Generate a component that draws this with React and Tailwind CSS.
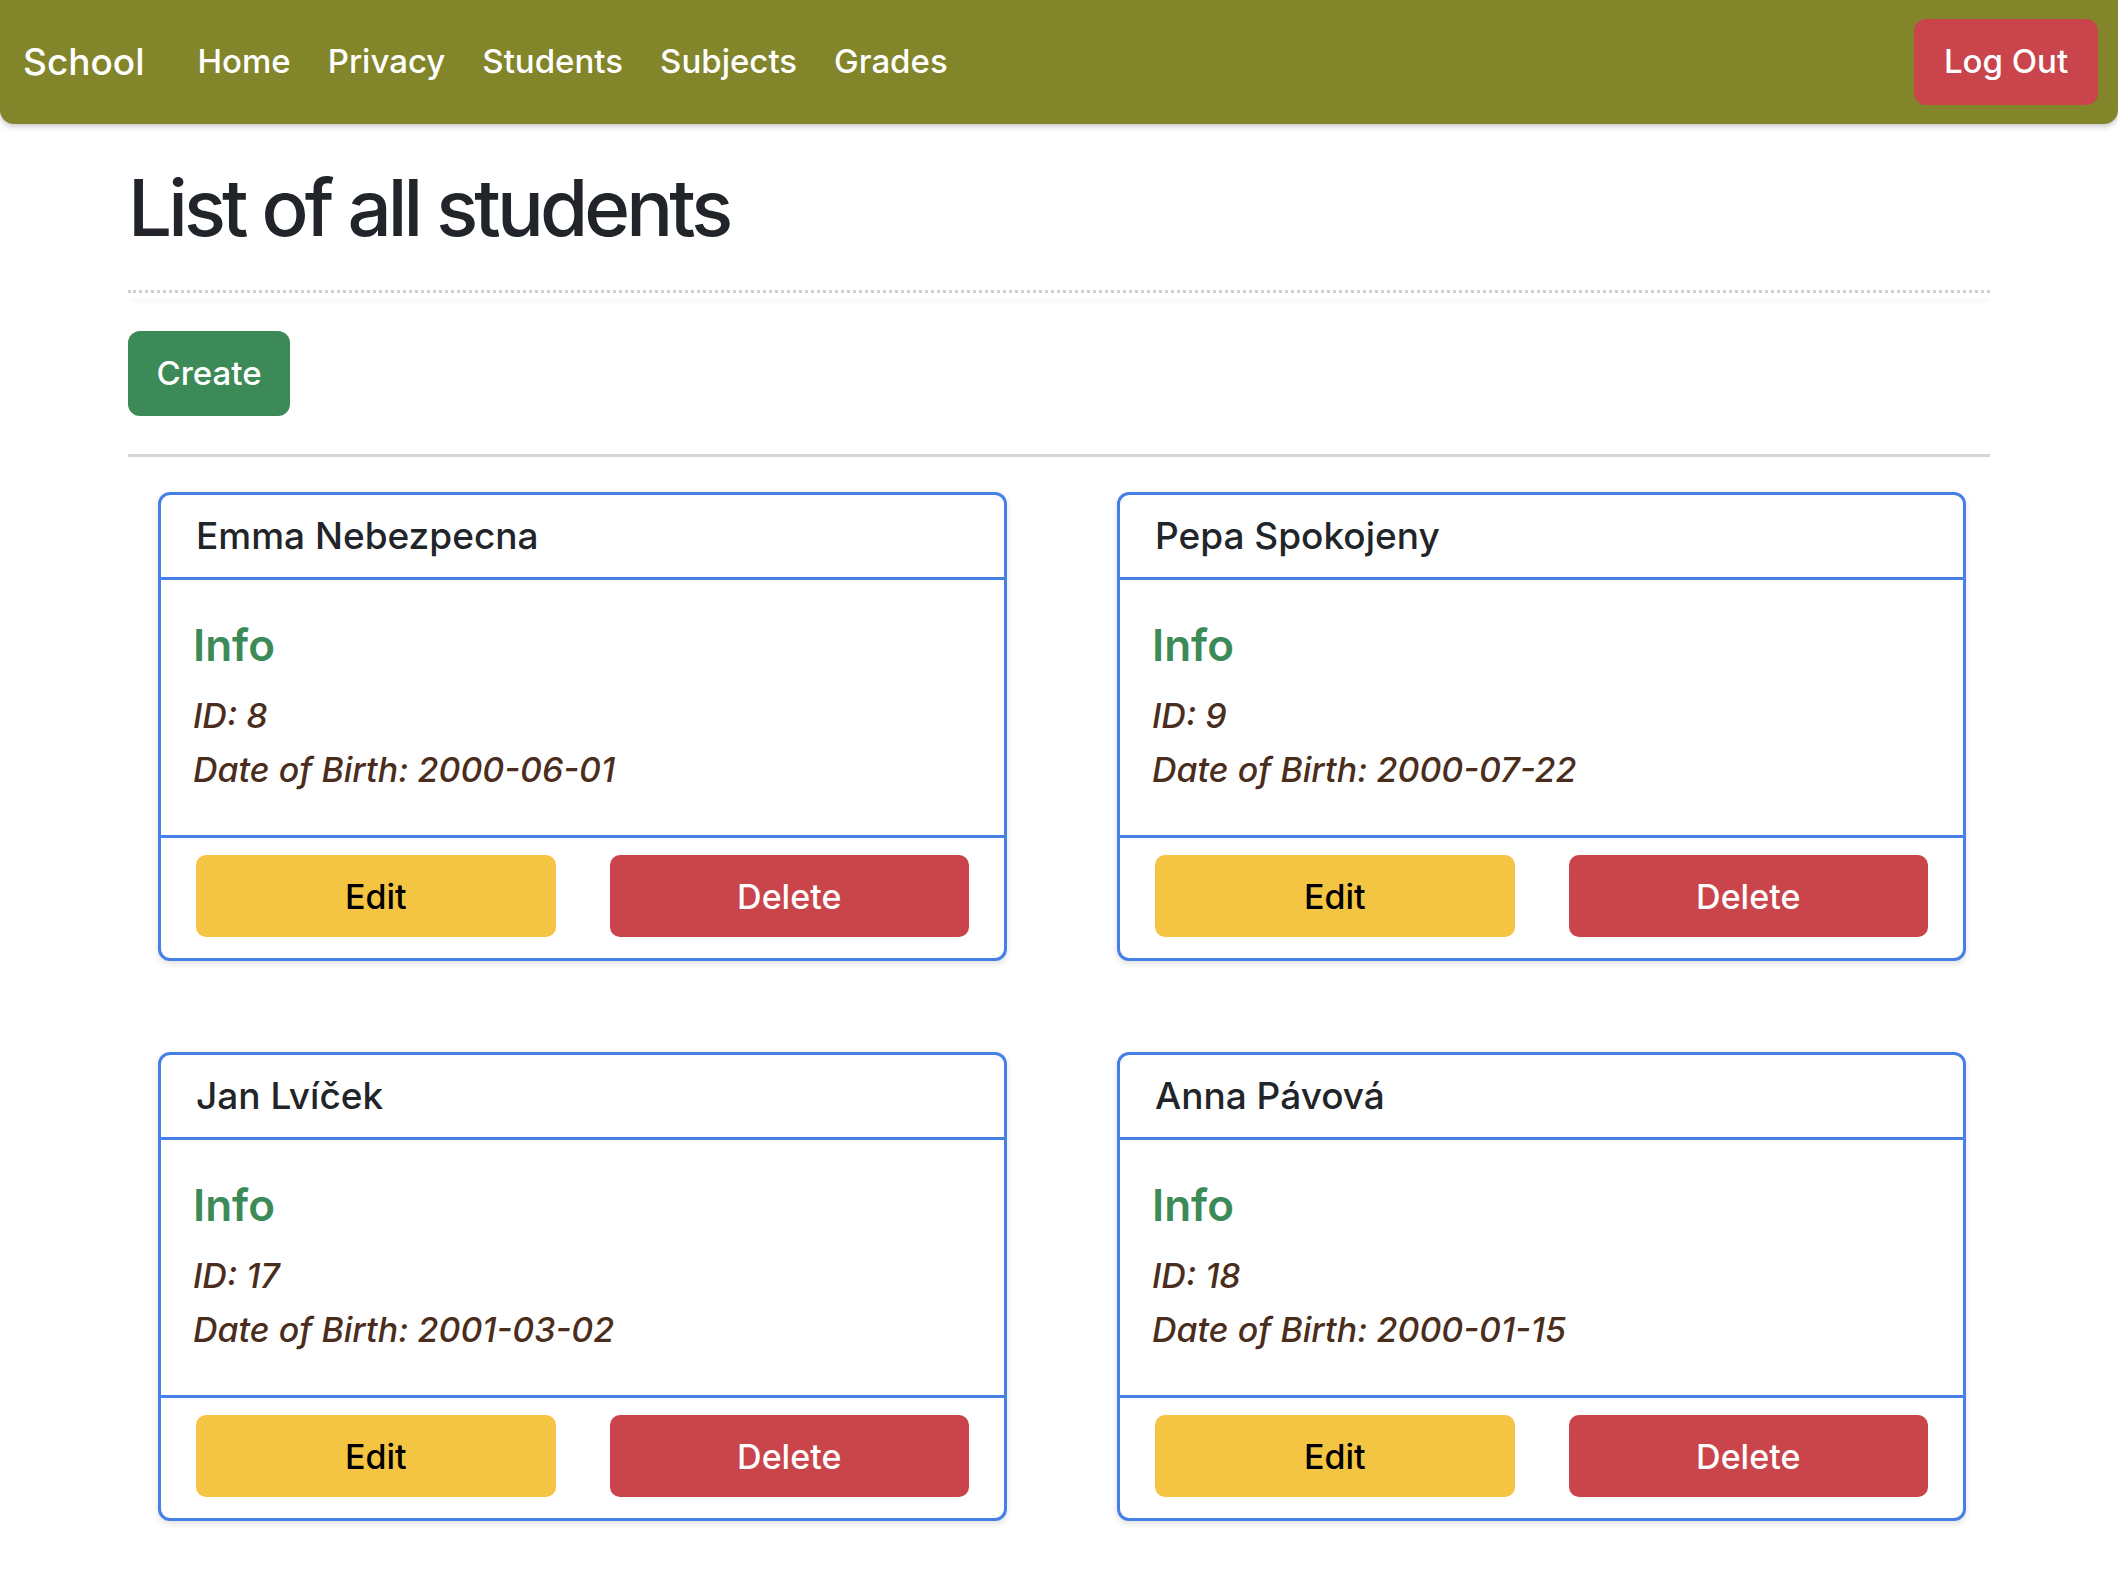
import React from "react";

const students = [
  { name: "Emma Nebezpecna", id: 8, dob: "2000-06-01" },
  { name: "Pepa Spokojeny", id: 9, dob: "2000-07-22" },
  { name: "Jan Lvíček", id: 17, dob: "2001-03-02" },
  { name: "Anna Pávová", id: 18, dob: "2000-01-15" },
];

function Card({ s }) {
  return (
    <div className="flex flex-col rounded-[12px] border-[3px] border-[#4680e6] bg-white shadow-[0_3px_6px_rgba(0,0,0,0.12)]">
      <div className="flex h-[85px] items-center border-b-[3px] border-[#4680e6] px-[35px] text-[37px] font-medium text-[#212529]">
        {s.name}
      </div>
      <div className="px-[32px] pb-[41px] pt-[36px]">
        <div className="text-[44px] font-semibold leading-[58px] text-[#3d8a59]">Info</div>
        <div className="mt-[18px] text-[34px] font-medium italic leading-[48px] text-[#4a2d1c]">ID: {s.id}</div>
        <div className="mt-[6px] text-[34px] font-medium italic leading-[48px] text-[#4a2d1c]">
          Date of Birth: {s.dob}
        </div>
      </div>
      <div className="grid grid-cols-2 gap-[54px] border-t-[3px] border-[#4680e6] px-[35px] pb-[21px] pt-[17px]">
        <button className="h-[82px] rounded-[10px] bg-[#f4c443] text-[34px] font-medium text-black">Edit</button>
        <button className="h-[82px] rounded-[10px] bg-[#c9454b] text-[34px] font-medium text-white">Delete</button>
      </div>
    </div>
  );
}

export default function App() {
  return (
    <div className="min-h-[1589px] bg-white font-['Inter',sans-serif]">
      <nav className="flex h-[124px] items-center rounded-b-[14px] bg-[#82852a] pl-[23px] pr-[20px] shadow-[0_2px_6px_rgba(0,0,0,0.25)]">
        <span className="text-[37px] font-medium text-white">School</span>
        <ul className="ml-[53px] flex gap-[37px] text-[33px] font-medium text-white">
          <li>Home</li>
          <li>Privacy</li>
          <li>Students</li>
          <li>Subjects</li>
          <li>Grades</li>
        </ul>
        <button className="ml-auto h-[86px] w-[184px] rounded-[12px] bg-[#c9454b] text-[33px] font-medium text-white">
          Log Out
        </button>
      </nav>
      <main className="px-[128px] pt-[36px]">
        <h1 className="text-[78px] font-medium leading-[96px] tracking-[-0.05em] text-[#212529]">
          List of all students
        </h1>
        <div className="mt-[34px] h-[8px] border-t-[3px] border-dotted border-[#cfcfcf] shadow-[0_5px_6px_-3px_rgba(0,0,0,0.12)]" />
        <button className="mt-[33px] h-[85px] w-[162px] rounded-[12px] bg-[#3d8a59] text-[33px] font-medium text-white">
          Create
        </button>
        <div className="mt-[38px] h-[6px] border-t-[3px] border-[#d6d6d6] shadow-[0_4px_5px_-3px_rgba(0,0,0,0.08)]" />
        <div className="mt-[32px] grid grid-cols-[849px_849px] gap-x-[110px] gap-y-[91px] pl-[30px]">
          {students.map((s) => (
            <Card key={s.id} s={s} />
          ))}
        </div>
      </main>
    </div>
  );
}
